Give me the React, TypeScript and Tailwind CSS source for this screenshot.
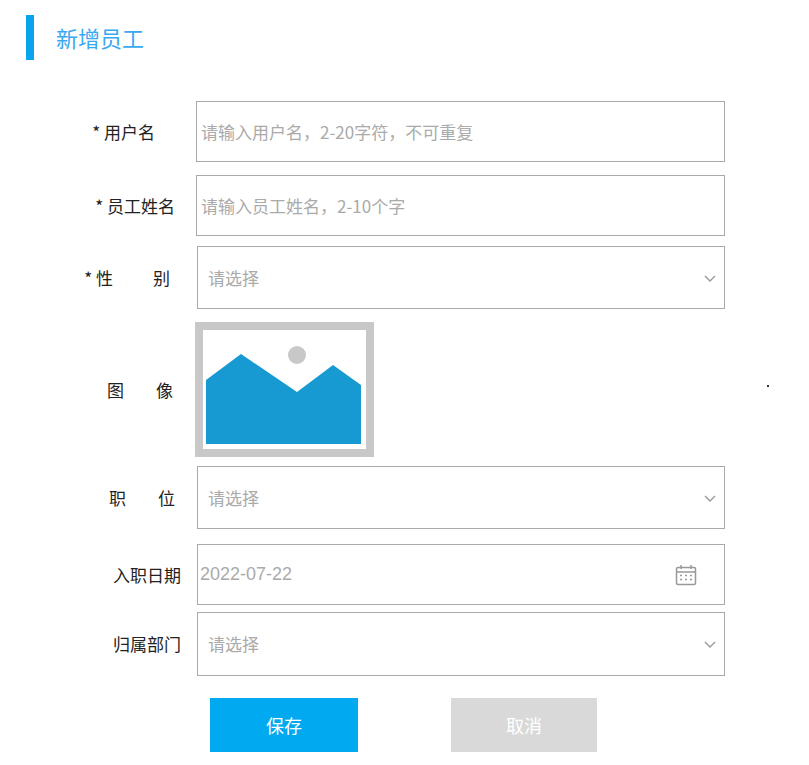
import React from 'react';

const font = { fontFamily: '"Noto Sans CJK SC", "Liberation Sans", sans-serif' };

function Chevron() {
  return (
    <svg width="16" height="16" viewBox="0 0 16 16" className="text-[#999]">
      <path d="M3 6l5 5 5-5" fill="none" stroke="currentColor" strokeWidth="1.4" />
    </svg>
  );
}

function Calendar() {
  return (
    <svg width="24" height="24" viewBox="0 0 24 24" className="text-[#999]">
      <rect x="2.5" y="4.5" width="19" height="17" rx="1.5" fill="none" stroke="currentColor" strokeWidth="1.5" />
      <line x1="2.5" y1="9" x2="21.5" y2="9" stroke="currentColor" strokeWidth="1.5" />
      <line x1="7" y1="2" x2="7" y2="6" stroke="currentColor" strokeWidth="1.5" />
      <line x1="17" y1="2" x2="17" y2="6" stroke="currentColor" strokeWidth="1.5" />
      <path d="M6 12.5h2M11 12.5h2M16 12.5h2M6 16.5h2M11 16.5h2M16 16.5h2" stroke="currentColor" strokeWidth="1.3" />
    </svg>
  );
}

function Row({ label, pr, mt, h, children }: { label: React.ReactNode; pr: string; mt: string; h: string; children: React.ReactNode }) {
  return (
    <div className={`flex items-center ${mt}`}>
      <div className={`w-[196px] shrink-0 text-right text-[17px] text-[#222] ${pr}`}>{label}</div>
      <div className={`w-[529px] ${h}`}>{children}</div>
    </div>
  );
}

export default function App() {
  return (
    <div className="relative w-[809px] h-[765px] bg-white" style={font}>
      <div className="flex items-center pt-[15px] pl-[26px]">
        <div className="w-[8px] h-[45px] bg-[#09a4ee]" />
        <div className="ml-[22px] text-[22px] text-[#3aa8f0]">新增员工</div>
      </div>

      <Row label="* 用户名" pr="pr-[41px]" mt="mt-[41px]" h="h-[61px]">
        <div className="h-full border border-[#aaa] flex items-center px-[4px] text-[17px] text-[#aaa]">请输入用户名，2-20字符，不可重复</div>
      </Row>
      <Row label="* 员工姓名" pr="pr-[21px]" mt="mt-[13px]" h="h-[61px]">
        <div className="h-full border border-[#aaa] flex items-center px-[4px] text-[17px] text-[#aaa]">请输入员工姓名，2-10个字</div>
      </Row>
      <Row label={<span>* 性<span className="inline-block w-[40px]" />别</span>} pr="pr-[26px]" mt="mt-[10px]" h="h-[63px]">
        <div className="h-full ml-[1px] border border-[#aaa] flex items-center justify-between pl-[10px] pr-[6px] text-[17px] text-[#aaa]">请选择<Chevron /></div>
      </Row>
      <Row label={<span>图<span className="inline-block w-[32px]" />像</span>} pr="pr-[23px]" mt="mt-[13px]" h="h-[135px]">
        <div className="w-[179px] h-[135px] -ml-[1px] border-[8px] border-[#c8c8c8] bg-white p-[3px]">
          <svg width="155" height="111" viewBox="0 0 155 111" className="block">
            <circle cx="91" cy="22" r="9" fill="#c8c8c8" />
            <path d="M0 47 L35 21 L91 59 L127 32 L155 52 L155 111 L0 111 Z" fill="#1799d2" />
          </svg>
        </div>
      </Row>
      <Row label={<span>职<span className="inline-block w-[32px]" />位</span>} pr="pr-[21px]" mt="mt-[9px]" h="h-[63px]">
        <div className="h-full ml-[1px] border border-[#aaa] flex items-center justify-between pl-[10px] pr-[6px] text-[17px] text-[#aaa]">请选择<Chevron /></div>
      </Row>
      <Row label="入职日期" pr="pr-[15px]" mt="mt-[15px]" h="h-[61px]">
        <div className="h-full ml-[1px] border border-[#aaa] flex items-center justify-between pl-[2px] pr-[26px] text-[18px] text-[#aaa]" style={{ fontFamily: '"Liberation Sans", sans-serif' }}>2022-07-22<Calendar /></div>
      </Row>
      <Row label="归属部门" pr="pr-[15px]" mt="mt-[7px]" h="h-[64px]">
        <div className="h-full ml-[1px] border border-[#aaa] flex items-center justify-between pl-[10px] pr-[6px] text-[17px] text-[#aaa]">请选择<Chevron /></div>
      </Row>

      <div className="flex mt-[22px] pl-[210px] gap-[93px]">
        <button className="w-[148px] h-[54px] bg-[#00a9f0] text-white text-[18px]">保存</button>
        <button className="w-[146px] h-[54px] bg-[#d9d9d9] text-white text-[18px]">取消</button>
      </div>

      <div className="absolute left-[767px] top-[385px] w-[2px] h-[2px] bg-[#333]" />
    </div>
  );
}
